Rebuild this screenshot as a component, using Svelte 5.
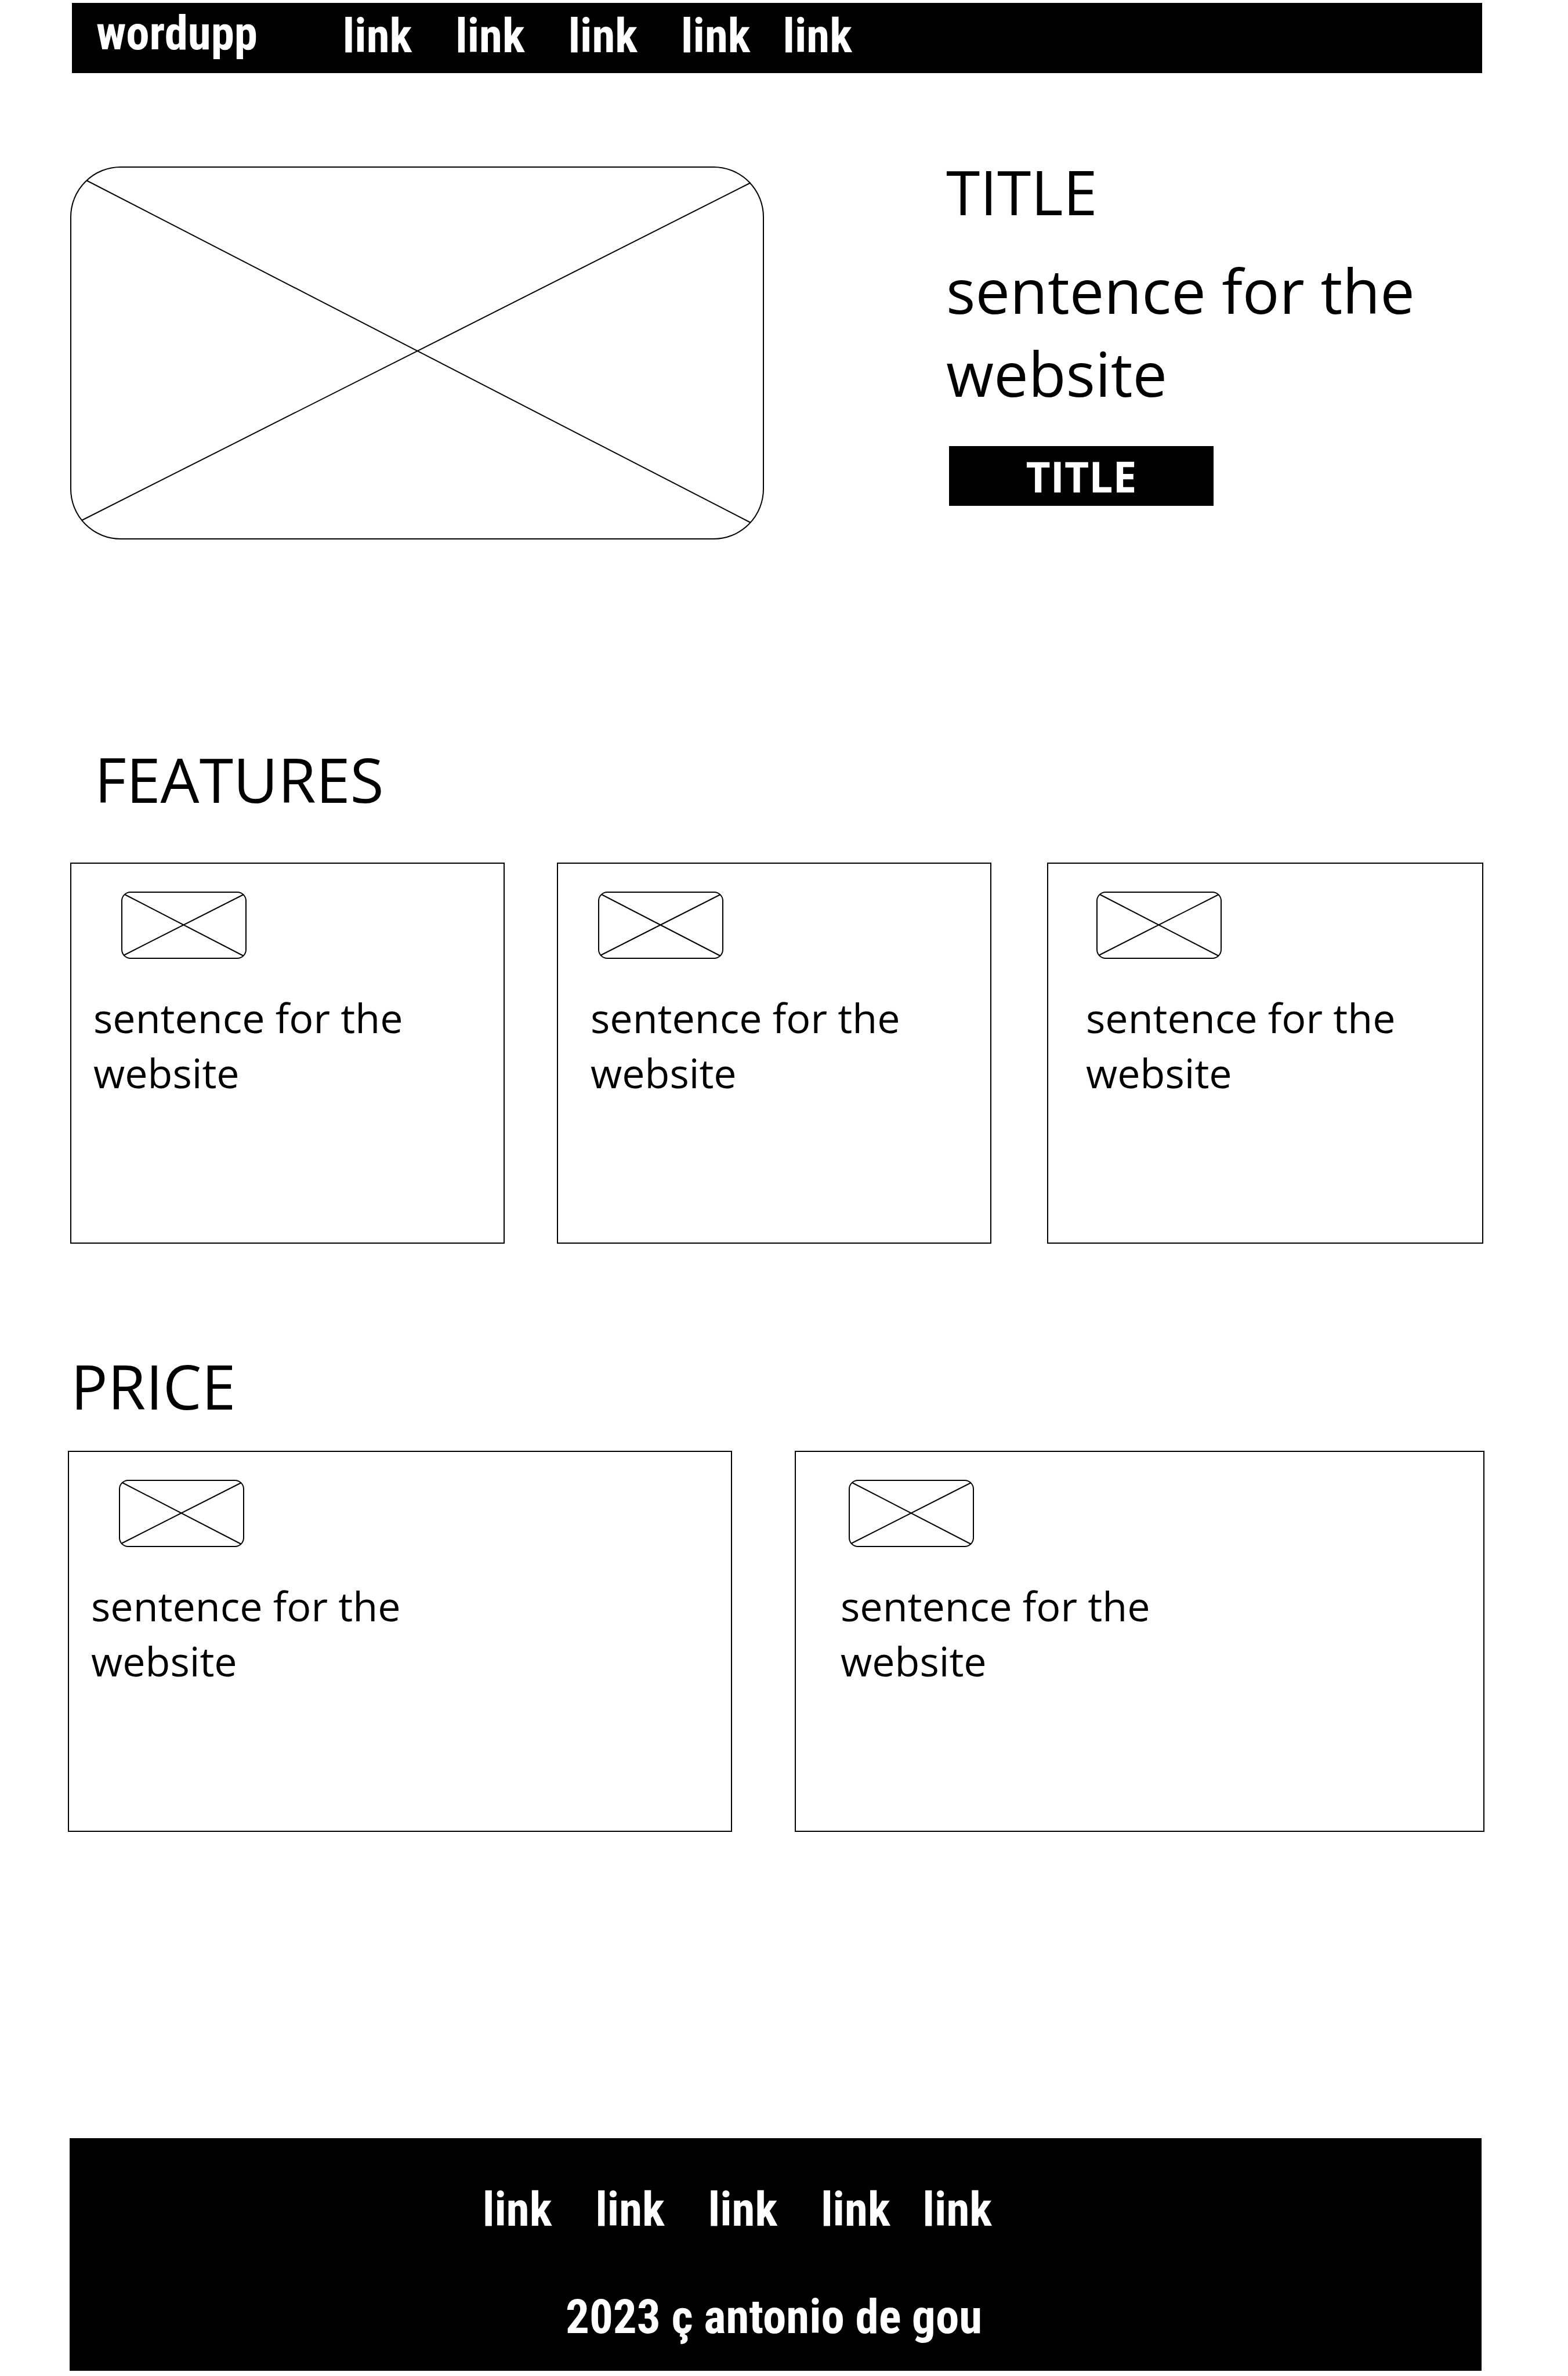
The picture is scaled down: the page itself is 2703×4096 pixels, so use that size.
<script>
  const links = ['link', 'link', 'link', 'link', 'link'];
  const features = ['sentence for the website', 'sentence for the website', 'sentence for the website'];
  const prices = ['sentence for the website', 'sentence for the website'];
</script>

{#snippet thumb()}
  <svg class="thumb" viewBox="0 0 216 116" role="img" aria-label="Image placeholder">
    <rect x="1" y="1" width="214" height="114" rx="15" />
    <path d="M6 5 211 111M4 110 211 5" />
  </svg>
{/snippet}

{#snippet linkList()}
  {#each links as link}
    <a href="#top">{link}</a>
  {/each}
{/snippet}

<div class="page" id="top">
  <header class="bar">
    <a class="brand" href="#top">wordupp</a>
    <nav class="links" aria-label="Main">{@render linkList()}</nav>
  </header>

  <main>
    <section class="hero">
      <svg class="picture" viewBox="0 0 1196 643" role="img" aria-label="Image placeholder">
        <rect x="1" y="1" width="1194" height="641" rx="86" />
        <path d="M28 24 1173 614M20 610 1173 28" />
      </svg>
      <div class="intro">
        <h1>TITLE</h1>
        <p>sentence for the website</p>
        <button type="button">TITLE</button>
      </div>
    </section>

    <section class="features">
      <h2>FEATURES</h2>
      <div class="cards">
        {#each features as text}
          <article class="card">
            {@render thumb()}
            <p>{text}</p>
          </article>
        {/each}
      </div>
    </section>

    <section class="prices">
      <h2>PRICE</h2>
      <div class="cards">
        {#each prices as text}
          <article class="card">
            {@render thumb()}
            <p>{text}</p>
          </article>
        {/each}
      </div>
    </section>
  </main>

  <footer>
    <nav class="links" aria-label="Footer">{@render linkList()}</nav>
    <p>2023 ç antonio de gou</p>
  </footer>
</div>

<style>
  :global(body) {
    background: #fff;
  }

  .page {
    box-sizing: border-box;
    padding: 5px 0 8px;
    color: #000;
    font-family: 'Open Sans', 'Noto Sans', sans-serif;
  }

  h1,
  h2,
  p {
    margin: 0;
    font-weight: inherit;
  }

  h1,
  h2,
  .intro p {
    font-size: 106px;
    line-height: 143px;
  }

  svg {
    display: block;
    fill: none;
    stroke: #000;
    stroke-width: 2;
  }

  .bar,
  footer {
    box-sizing: border-box;
    background: #000;
    color: #fff;
    font-family: 'Roboto Condensed', 'Liberation Sans Narrow', Roboto, sans-serif;
    font-size: 81px;
    font-weight: 700;
    line-height: 95px;
  }

  .bar a,
  footer a {
    color: inherit;
    text-decoration: none;
  }

  .bar {
    display: flex;
    align-items: center;
    gap: 147px;
    min-height: 121px;
    margin: 0 148px 0 124px;
    padding-left: 42px;
  }

  .brand {
    padding-bottom: 16px;
  }

  .links {
    display: flex;
    gap: 75px;
  }

  .links a:last-child {
    margin-left: -19px;
  }

  .bar .links {
    padding-bottom: 6px;
  }

  .hero {
    display: grid;
    grid-template-columns: 1196fr 926fr;
    column-gap: 314px;
    align-items: start;
    margin: 133px 146px 0 121px;
  }

  .picture {
    width: 100%;
    margin-top: 28px;
  }

  .intro h1 {
    margin-bottom: 27px;
  }

  .intro p {
    max-width: 850px;
  }

  button {
    display: block;
    width: 456px;
    height: 103px;
    margin: 54px 0 0 5px;
    padding: 0;
    border: 0;
    background: #000;
    color: #fff;
    font: 700 73px/102px 'Open Sans', 'Noto Sans', sans-serif;
  }

  .cards {
    display: grid;
  }

  .card {
    box-sizing: border-box;
    min-height: 657px;
    padding: 48px 38px;
    border: 2px solid #000;
  }

  .card p {
    max-width: 580px;
    margin-top: 54px;
    font-size: 70px;
    line-height: 95px;
  }

  .thumb {
    width: 216px;
    margin-left: 48px;
  }

  .features {
    margin: 342px 146px 0 121px;
  }

  .features h2 {
    margin: 0 0 72px 42px;
  }

  .features .cards {
    grid-template-columns: 749fr 749fr 758fr;
    column-gap: 90px;
  }

  .features .card:nth-child(2) {
    padding-left: 56px;
  }

  .features .card:nth-child(2) .thumb {
    margin-left: 13px;
  }

  .features .card:nth-child(3) {
    margin-left: 6px;
    padding-left: 65px;
  }

  .features .card:nth-child(3) .thumb {
    margin-left: 18px;
  }

  .prices {
    margin: 174px 144px 0 117px;
  }

  .prices h2 {
    margin: 0 0 40px 5px;
  }

  .prices .cards {
    grid-template-columns: 1145fr 1189fr;
    column-gap: 108px;
  }

  .prices .card:nth-child(2) {
    padding-left: 77px;
  }

  .prices .card:nth-child(2) .thumb {
    margin-left: 14px;
  }

  footer {
    display: flex;
    flex-direction: column;
    align-items: center;
    gap: 90px;
    min-height: 401px;
    margin: 528px 149px 0 120px;
    padding: 76px 6px 0 0;
  }

  footer .links {
    margin-right: 126px;
  }
</style>
